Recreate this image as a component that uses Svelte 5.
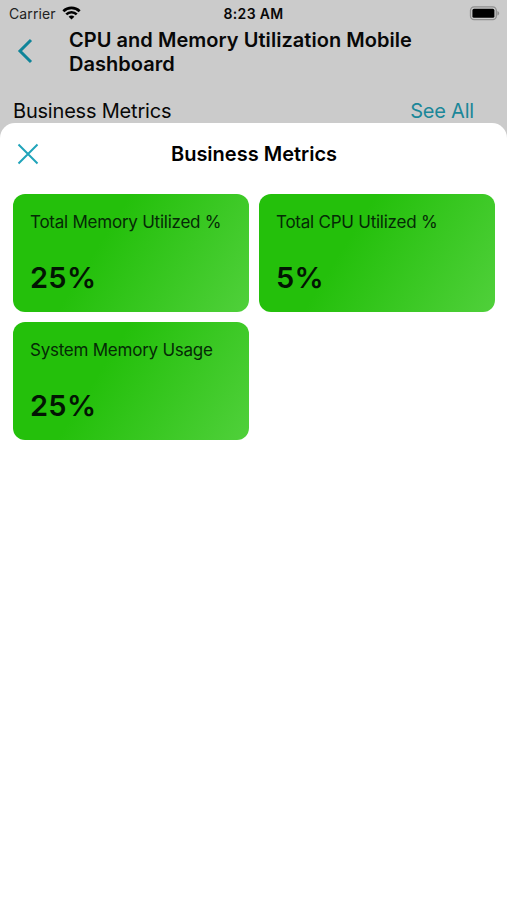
<script>
  const metrics = [
    { label: 'Total Memory Utilized %', value: '25%' },
    { label: 'Total CPU Utilized %', value: '5%' },
    { label: 'System Memory Usage', value: '25%' }
  ];

  let open = $state(true);
</script>

<div class="screen">
  <div class="backdrop">
    <div class="status">
      <div class="carrier">
        <span>Carrier</span>
        <svg width="19" height="14" viewBox="0 0 20 14" fill="none" stroke="#000" stroke-width="2.8">
          <path d="M1.4 5.2a12.2 12.2 0 0 1 17.2 0" />
          <path d="M4.5 8.5a7.8 7.8 0 0 1 11 0" />
          <path d="M10 13.9 7 10.9a4.2 4.2 0 0 1 6 0z" fill="#000" stroke="none" />
        </svg>
      </div>
      <span class="time">8:23 AM</span>
      <svg class="battery" width="31" height="15" viewBox="0 0 31 15">
        <rect x="1.5" y="0.9" width="25.8" height="12.8" rx="3.6" fill="none" stroke="#8f8f8f" stroke-width="1.3" />
        <rect x="3.4" y="2.8" width="22" height="9" rx="1.6" fill="#000" />
        <path d="M28.4 5c2.4 1 2.4 3.6 0 4.6z" fill="#8f8f8f" />
      </svg>
    </div>

    <header>
      <button aria-label="Back">
        <svg width="16" height="26" viewBox="0 0 16 26" fill="none" stroke="#0f8499" stroke-width="3">
          <path d="M14 2 3 13l11 11" />
        </svg>
      </button>
      <h1>CPU and Memory Utilization Mobile Dashboard</h1>
    </header>

    <div class="section">
      <h2>Business Metrics</h2>
      <button class="link" onclick={() => (open = true)}>See All</button>
    </div>
  </div>

  {#if open}
    <div class="sheet">
      <div class="bar">
        <button aria-label="Close" onclick={() => (open = false)}>
          <svg width="22" height="22" viewBox="0 0 22 22" fill="none" stroke="#20a4ba" stroke-width="2">
            <path d="M1.5 1.5l19 19M20.5 1.5l-19 19" />
          </svg>
        </button>
        <h3>Business Metrics</h3>
      </div>

      <div class="grid">
        {#each metrics as metric}
          <div class="card">
            <span class="label">{metric.label}</span>
            <span class="value">{metric.value}</span>
          </div>
        {/each}
      </div>
    </div>
  {/if}
</div>

<style>
  :global(body) {
    margin: 0;
  }
  .screen {
    display: flex;
    flex-direction: column;
    height: 900px;
    overflow: hidden;
    background: #cbcbcb;
    font-family: Inter, sans-serif;
    color: #080808;
  }
  .backdrop {
    height: 123px;
    flex: none;
  }
  h1,
  h2,
  h3 {
    margin: 0;
  }
  button {
    display: flex;
    padding: 0;
    border: none;
    background: none;
    font: inherit;
    cursor: pointer;
  }
  .status {
    display: grid;
    grid-template-columns: 1fr auto 1fr;
    align-items: center;
    height: 27px;
    padding: 0 7px 0 9px;
    font-size: 14px;
    line-height: 27px;
  }
  .carrier {
    display: flex;
    align-items: center;
    gap: 6px;
    color: #222;
    letter-spacing: 0.1px;
  }
  .carrier svg {
    margin-top: -2px;
  }
  .time {
    margin-left: -2px;
    font-weight: 600;
    letter-spacing: 0.3px;
  }
  .battery {
    justify-self: end;
  }
  header {
    display: flex;
    height: 52px;
    padding-left: 17px;
  }
  header button {
    width: 52px;
    padding-top: 11px;
    align-items: flex-start;
  }
  h1 {
    width: 370px;
    padding-top: 1px;
    font-size: 20px;
    font-weight: 600;
    line-height: 24px;
    letter-spacing: 0.04px;
  }
  .section {
    display: flex;
    justify-content: space-between;
    padding: 19px 33px 0 13px;
    font-size: 20px;
    line-height: 26px;
    letter-spacing: -0.2px;
  }
  h2 {
    font-size: 20px;
    font-weight: 400;
  }
  .link {
    color: #1b8799;
    letter-spacing: -0.2px;
  }
  .sheet {
    flex: 1;
    padding: 0 13px;
    border-radius: 15px 15px 0 0;
    background: #fff;
  }
  .bar {
    display: grid;
    grid-template-columns: 1fr auto 1fr;
    align-items: center;
    height: 61px;
    padding: 0 0 0 4px;
    margin-bottom: 10px;
  }
  h3 {
    margin-right: 3px;
    font-size: 20px;
    font-weight: 600;
    color: #000;
  }
  .grid {
    display: grid;
    grid-template-columns: repeat(2, 236px);
    gap: 10px;
  }
  .card {
    display: flex;
    flex-direction: column;
    justify-content: space-between;
    box-sizing: border-box;
    height: 118px;
    padding: 16px 17px;
    border-radius: 12px;
    background: linear-gradient(122deg, #24c00b 0%, #24c00b 38%, #50d03b 100%);
  }
  .label {
    font-size: 17px;
    line-height: 24px;
    letter-spacing: -0.24px;
    color: #052a06;
    white-space: nowrap;
  }
  .value {
    font-size: 29px;
    font-weight: 600;
    line-height: 36px;
    letter-spacing: 0.3px;
    color: #021503;
  }
</style>
